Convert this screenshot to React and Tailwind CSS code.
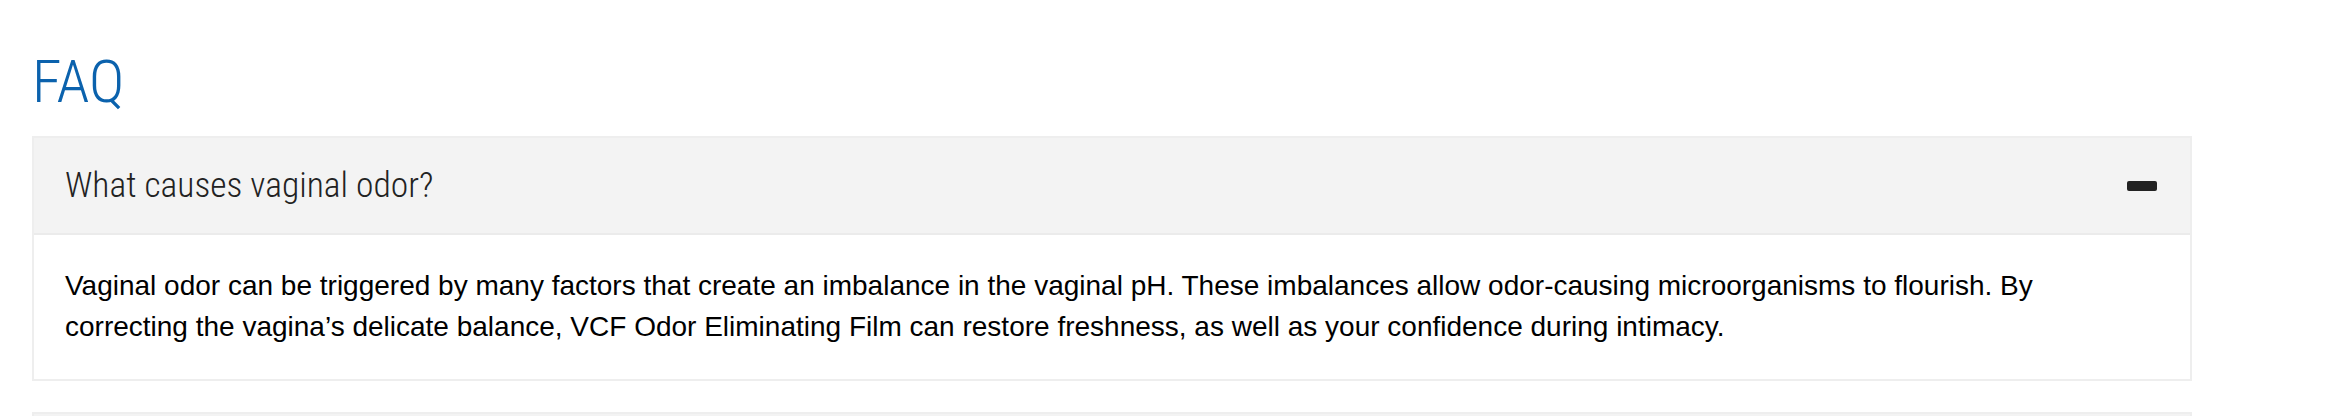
import React from "react";

function FaqItem({ question, answer, open }) {
  return (
    <div className="w-[2160px] border-2 border-[#eeeeee] bg-white">
      <div className="flex h-[97px] items-center justify-between bg-[#f3f3f3] pl-[31px] pr-[33px] border-b-2 border-[#ebebeb]">
        <span className="font-['Roboto',sans-serif] text-[35.5px] font-light leading-none text-[#222222] [font-stretch:75%]">
          {question}
        </span>
        <span className="block h-[10px] w-[30px] rounded-[2px] bg-[#222222]" />
      </div>
      {open && (
        <div className="pl-[31px] pr-[31px] pt-[30px] pb-[32px]">
          <p className="font-['Liberation_Sans',Arial,sans-serif] text-[28px] leading-[41px] text-black">
            {answer}
          </p>
        </div>
      )}
    </div>
  );
}

export default function App() {
  return (
    <div className="h-[416px] w-[2344px] overflow-hidden bg-white pl-[32px] pt-[52px]">
      <h2 className="font-['Roboto',sans-serif] text-[60px] font-light leading-[60px] text-[#0b62ad] [font-stretch:75%]">
        FAQ
      </h2>
      <div className="mt-[24px] flex flex-col gap-[31px]">
        <FaqItem
          open
          question="What causes vaginal odor?"
          answer="Vaginal odor can be triggered by many factors that create an imbalance in the vaginal pH. These imbalances allow odor-causing microorganisms to flourish. By correcting the vagina’s delicate balance, VCF Odor Eliminating Film can restore freshness, as well as your confidence during intimacy."
        />
        <FaqItem question="" />
      </div>
    </div>
  );
}
